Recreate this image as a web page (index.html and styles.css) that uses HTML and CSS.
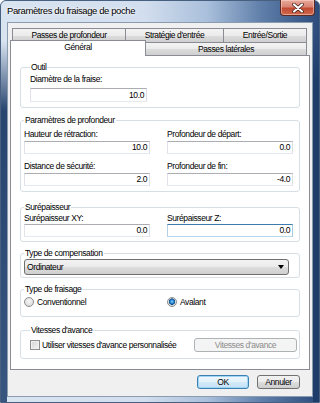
FILE: index.html
```html
<!DOCTYPE html>
<html lang="fr">
<head>
<meta charset="utf-8">
<title>Paramètres du fraisage de poche</title>
<link rel="stylesheet" href="styles.css">
</head>
<body>
<div class="window">
  <div class="titlebar">
    <span class="title">Paramètres du fraisage de poche</span>
    <span class="close">
      <svg width="14" height="10" viewBox="0 0 14 10">
        <path d="M3 1.5 L11 8.5 M11 1.5 L3 8.5" stroke="#3a1a14" stroke-width="3.6" stroke-linecap="round"/>
        <path d="M3 1.5 L11 8.5 M11 1.5 L3 8.5" stroke="#ffffff" stroke-width="2.2" stroke-linecap="round"/>
      </svg>
    </span>
  </div>
  <div class="client">
    <div class="tabctl">
      <div class="tabrow back">
        <div class="tab w1">Passes de profondeur</div>
        <div class="tab w2">Stratégie d'entrée</div>
        <div class="tab w3">Entrée/Sortie</div>
      </div>
      <div class="tabrow front">
        <div class="tab sel w4">Général</div>
        <div class="tab w5">Passes latérales</div>
      </div>
      <div class="page">
        <fieldset class="group g1">
          <legend>Outil</legend>
          <div class="lbl">Diamètre de la fraise:</div>
          <div class="edit e1">10.0</div>
        </fieldset>

        <fieldset class="group g2">
          <legend>Paramètres de profondeur</legend>
          <div class="grid">
            <div class="field">
              <div class="lbl">Hauteur de rétraction:</div>
              <div class="edit">10.0</div>
            </div>
            <div class="field">
              <div class="lbl">Profondeur de départ:</div>
              <div class="edit">0.0</div>
            </div>
            <div class="field r2">
              <div class="lbl">Distance de sécurité:</div>
              <div class="edit">2.0</div>
            </div>
            <div class="field r2">
              <div class="lbl">Profondeur de fin:</div>
              <div class="edit">-4.0</div>
            </div>
          </div>
        </fieldset>

        <fieldset class="group g3">
          <legend>Surépaisseur</legend>
          <div class="grid">
            <div class="field">
              <div class="lbl">Surépaisseur XY:</div>
              <div class="edit">0.0</div>
            </div>
            <div class="field">
              <div class="lbl">Surépaisseur Z:</div>
              <div class="edit focus">0.0</div>
            </div>
          </div>
        </fieldset>

        <fieldset class="group g4">
          <legend>Type de compensation</legend>
          <div class="combo">
            <span>Ordinateur</span>
            <span class="arrow"></span>
          </div>
        </fieldset>

        <fieldset class="group g5">
          <legend>Type de fraisage</legend>
          <div class="grid">
            <div class="opt"><span class="radio"></span><span>Conventionnel</span></div>
            <div class="opt"><span class="radio on"></span><span>Avalant</span></div>
          </div>
        </fieldset>

        <fieldset class="group g6">
          <legend>Vitesses d'avance</legend>
          <div class="chkrow">
            <span class="check"></span>
            <span class="chklbl">Utiliser vitesses d'avance personnalisée</span>
            <span class="btn disabled">Vitesses d'avance</span>
          </div>
        </fieldset>
      </div>
    </div>
    <div class="footer">
      <span class="btn default okbtn">OK</span>
      <span class="btn cancel">Annuler</span>
    </div>
  </div>
</div>
</body>
</html>
```

FILE: styles.css
```css
html, body {
  margin: 0;
  padding: 0;
}
body {
  width: 320px;
  height: 403px;
  overflow: hidden;
  font-family: "Liberation Sans", Arial, sans-serif;
  font-size: 8.5px;
  letter-spacing: -0.4px;
  color: #000;
  background: #ffffff;
}
.window {
  width: 320px;
  height: 403px;
  box-sizing: border-box;
  border: 1px solid #48607f;
  border-radius: 6px 6px 0 0;
  display: flex;
  flex-direction: column;
  background:
    linear-gradient(to bottom, rgba(36,67,111,0) 40px, rgba(30,60,104,0.95) 110px, rgba(38,70,115,0.9) 400px) left top / 6px 100% no-repeat,
    linear-gradient(to bottom, rgba(36,67,111,0) 30px, rgba(30,60,104,0.95) 80px) right top / 6px 100% no-repeat,
    linear-gradient(to right, #d9e4f1 0%, #d2deee 45%, #a9bfdb 65%, #5f7ea9 82%, #2d4c7c 100%);
}
.titlebar {
  height: 21px;
  display: flex;
  align-items: flex-start;
  padding-left: 6px;
}
.title {
  font-size: 9.5px;
  letter-spacing: -0.4px;
  line-height: 13px;
  padding-top: 3px;
  color: #000;
  text-shadow: 0 0 4px #ffffff, 0 0 2px #ffffff;
}
.close {
  margin-left: auto;
  margin-right: 4px;
  margin-top: -1px;
  width: 35px;
  height: 16px;
  box-sizing: border-box;
  border: 1px solid #5a2a22;
  border-top: none;
  border-radius: 0 0 4px 4px;
  background: linear-gradient(to bottom, #e9a99b 0%, #d88472 45%, #c24a33 55%, #cf6a4e 100%);
  box-shadow: inset 0 0 0 1px rgba(255,220,210,0.5);
  display: flex;
  align-items: center;
  justify-content: center;
}
.client {
  flex: 1;
  margin: 0 6px 5px 6px;
  border: 1px solid #8c9cb0;
  background: #f0f0f0;
  display: flex;
  flex-direction: column;
  padding: 5px 0 0 2px;
}
.tabctl {
  width: 300px;
  display: flex;
  flex-direction: column;
}
.tabrow {
  display: flex;
  align-items: flex-end;
}
.tabrow.back {
  height: 14px;
  padding-left: 2px;
}
.tabrow.front {
  height: 13px;
}
.tab {
  box-sizing: border-box;
  border: 1px solid #898c95;
  border-bottom: none;
  margin-right: -1px;
  text-align: center;
  line-height: 12px;
  background: linear-gradient(to bottom, #f3f3f3 0%, #ebebeb 50%, #dddddd 51%, #cfcfcf 100%);
}
.tabrow.back .tab {
  height: 14px;
}
.tabrow.front .tab {
  height: 13px;
}
.tabrow.front .tab.sel {
  height: 16px;
  margin-bottom: -1px;
  background: #ffffff;
  position: relative;
  z-index: 2;
  line-height: 13px;
}
.w1 { width: 114px; }
.w2 { width: 99px; }
.w3 { width: 84px; }
.w4 { width: 136px; }
.w5 { width: 162px; }
.page {
  height: 315px;
  box-sizing: border-box;
  border: 1px solid #898c95;
  background: #ffffff;
  padding: 5px 9px 0 9px;
  display: flex;
  flex-direction: column;
}
.group {
  margin: 0;
  border: 1px solid #d5dfe5;
  border-radius: 3px;
  padding: 0 3px 5px 3px;
  min-width: 0;
}
.group legend {
  padding: 0 1px;
  line-height: 12px;
  color: #000;
}
.lbl {
  line-height: 12px;
  white-space: nowrap;
}
.edit {
  height: 13px;
  box-sizing: border-box;
  border: 1px solid #abadb3;
  border-left-color: #e2e3ea;
  border-right-color: #dbdfe6;
  border-bottom-color: #e3e9ef;
  background: #ffffff;
  text-align: right;
  padding-right: 2px;
  line-height: 11px;
  margin-top: 1px;
}
.edit.focus {
  border-color: #3d7bad #a4c9e3 #b7d9ed #b5cfe7;
}
.g1 {
  padding-left: 9px;
}
.g1 .edit {
  width: 117px;
  margin-top: 3px;
  height: 14px;
  line-height: 12px;
}
.g2 {
  margin-top: 6px;
  padding-top: 2px;
}
.grid {
  display: grid;
  grid-template-columns: 126px 126px;
  column-gap: 17px;
}
.field.r2 {
  margin-top: 6px;
}
.g3 {
  margin-top: 9px;
  padding-bottom: 4px;
}
.g3 .lbl {
  line-height: 10px;
}
.g4 {
  margin-top: 5px;
  padding-bottom: 2px;
}
.combo {
  width: 265px;
  height: 16px;
  box-sizing: border-box;
  border: 1px solid #707070;
  border-radius: 3px;
  background: linear-gradient(to bottom, #f2f2f2 0%, #ebebeb 50%, #dddddd 51%, #cfcfcf 100%);
  display: flex;
  align-items: center;
  padding: 0 4px 0 2px;
}
.arrow {
  margin-left: auto;
  width: 0;
  height: 0;
  border-left: 3px solid transparent;
  border-right: 3px solid transparent;
  border-top: 4px solid #000;
}
.g5 {
  margin-top: 5px;
  padding-top: 1px;
  padding-bottom: 8px;
}
.opt {
  display: flex;
  align-items: center;
  gap: 3px;
  height: 12px;
}
.radio {
  width: 10px;
  height: 10px;
  box-sizing: border-box;
  border-radius: 50%;
  border: 1px solid #8f8f8f;
  background: radial-gradient(circle at 50% 40%, #f6f6f6 0%, #e2e2e2 60%, #c9c9c9 100%);
}
.radio.on {
  background:
    radial-gradient(circle at 50% 45%, #9fd8ff 0px, #2e8fd9 1.5px, #0c4c8c 3px, rgba(12,76,140,0) 3.4px),
    radial-gradient(circle at 50% 40%, #f6f6f6 0%, #e2e2e2 60%, #c9c9c9 100%);
}
.g6 {
  margin-top: 7px;
  padding-left: 9px;
  padding-right: 2px;
  padding-bottom: 6px;
}
.chkrow {
  display: flex;
  align-items: center;
  margin-top: 2px;
}
.check {
  width: 10px;
  height: 10px;
  box-sizing: border-box;
  border: 1px solid #8f8f8f;
  background: linear-gradient(135deg, #d6d6d6 0%, #f4f4f4 100%);
  box-shadow: inset 0 0 0 1px #f0f0f0;
}
.chklbl {
  margin-left: 2px;
  white-space: nowrap;
}
.btn {
  box-sizing: border-box;
  height: 14px;
  border: 1px solid #707070;
  border-radius: 3px;
  display: flex;
  align-items: center;
  justify-content: center;
  background: linear-gradient(to bottom, #f2f2f2 0%, #ebebeb 50%, #dddddd 51%, #cfcfcf 100%);
}
.btn.disabled {
  margin-left: auto;
  width: 103px;
  border-color: #adb2b5;
  background: #f4f4f4;
  color: #8b8b8b;
}
.footer {
  display: flex;
  justify-content: flex-end;
  gap: 8px;
  margin-top: 5px;
  padding-right: 12px;
}
.okbtn {
  width: 52px;
  border-color: #3c7fb1;
  background: linear-gradient(to bottom, #f0f8fd 0%, #e3f1fb 50%, #d3e9f8 51%, #c6e2f6 100%);
  box-shadow: inset 0 0 0 1px #9fd6f5;
}
.cancel {
  width: 43px;
}
```
